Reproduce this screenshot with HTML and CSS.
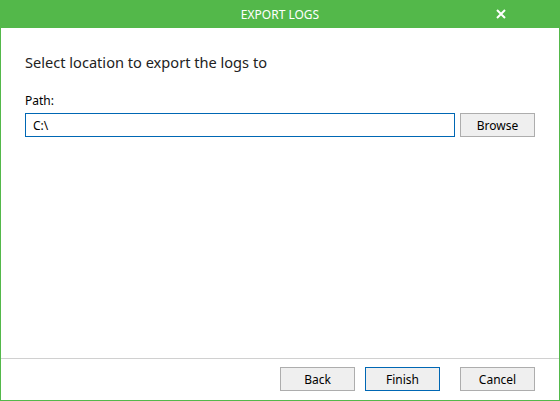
FILE: index.html
```html
<!DOCTYPE html>
<html lang="en">
<head>
    <meta charset="UTF-8">
    <title>Export Logs</title>
    <link rel="stylesheet" href="styles.css">
</head>
<body>
    <div class="dialog">
        <div class="title-bar">
            <span class="title">EXPORT LOGS</span>
            <button class="close" type="button" aria-label="Close">
                <svg width="10" height="10" viewBox="0 0 10 10">
                    <path d="M1 1 L9 9 M9 1 L1 9" stroke="#fff" stroke-width="2" fill="none"/>
                </svg>
            </button>
        </div>

        <div class="content">
            <h1>Select location to export the logs to</h1>

            <label for="path">Path:</label>
            <div class="path-row">
                <input type="text" id="path" value="C:\">
                <button type="button" class="btn">Browse</button>
            </div>
        </div>

        <div class="footer">
            <button type="button" class="btn">Back</button>
            <button type="button" class="btn btn-default">Finish</button>
            <button type="button" class="btn btn-cancel">Cancel</button>
        </div>
    </div>
</body>
</html>
```

FILE: styles.css
```css
* {
    box-sizing: border-box;
}

body {
    margin: 0;
    font-family: 'Segoe UI', 'Noto Sans', 'Open Sans', sans-serif;
    background: #fff;
}

.dialog {
    width: 560px;
    height: 401px;
    display: flex;
    flex-direction: column;
    border: 1px solid #53b84a;
    border-top: none;
}

.title-bar {
    height: 28px;
    margin: 0 -1px;
    background-color: #53b84a;
    display: flex;
    align-items: center;
    justify-content: center;
    position: relative;
}

.title {
    color: #fff;
    font-size: 12px;
}

.close {
    position: absolute;
    right: 54px;
    top: 9px;
    padding: 0;
    border: none;
    background: none;
    width: 10px;
    height: 10px;
    display: flex;
}

.content {
    flex: 1;
    padding: 24px 24px 0 24px;
}

.content h1 {
    margin: 0 0 20px 0;
    font-size: 14.6px;
    font-weight: normal;
    color: #222;
}

.content label {
    display: block;
    font-size: 12px;
    color: #000;
    margin-bottom: 4px;
}

.path-row {
    display: flex;
    gap: 5px;
}

.path-row input[type="text"] {
    width: 430px;
    height: 24px;
    border: 1px solid #0067b4;
    padding: 0 7px;
    font-family: inherit;
    font-size: 12px;
    color: #000;
    outline: none;
}

.btn {
    width: 75px;
    height: 24px;
    border: 1px solid #adadad;
    background-color: #efefef;
    font-family: inherit;
    font-size: 12px;
    color: #000;
    padding: 0;
}

.btn-default {
    border-color: #0067b4;
}

.footer {
    border-top: 1px solid #d0d0d0;
    height: 42px;
    padding: 8px 24px 0 0;
    display: flex;
    justify-content: flex-end;
    gap: 10px;
}

.footer .btn-cancel {
    margin-left: 10px;
}
```
